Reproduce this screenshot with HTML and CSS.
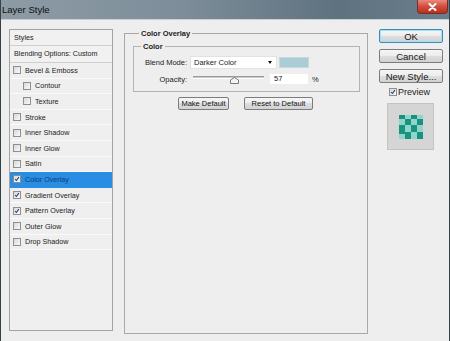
FILE: index.html
```html
<!DOCTYPE html>
<html lang="en">
<head>
    <meta charset="UTF-8">
    <title>Layer Style</title>
    <link rel="stylesheet" href="styles.css">
</head>
<body>
    <div class="window">
        <div class="titlebar">
            <span class="title">Layer Style</span>
            <span class="close">
                <svg width="9" height="8" viewBox="0 0 9 8"><path d="M1.5 1L7.5 7M7.5 1L1.5 7" stroke="#fff" stroke-width="2" stroke-linecap="round"/></svg>
            </span>
        </div>

        <div class="client">
            <div class="styles-list">
                <div class="list-head">Styles</div>
                <div class="list-head tall">Blending Options: Custom</div>
                <div class="item"><span class="check"></span>Bevel &amp; Emboss</div>
                <div class="item sub"><span class="check"></span>Contour</div>
                <div class="item sub"><span class="check"></span>Texture</div>
                <div class="item"><span class="check"></span>Stroke</div>
                <div class="item"><span class="check"></span>Inner Shadow</div>
                <div class="item"><span class="check"></span>Inner Glow</div>
                <div class="item"><span class="check"></span>Satin</div>
                <div class="item selected"><span class="check"><svg viewBox="0 0 8 8"><polyline points="1.5,4 3.2,6 6.5,1.5"/></svg></span>Color Overlay</div>
                <div class="item"><span class="check"><svg viewBox="0 0 8 8"><polyline points="1.5,4 3.2,6 6.5,1.5"/></svg></span>Gradient Overlay</div>
                <div class="item"><span class="check"><svg viewBox="0 0 8 8"><polyline points="1.5,4 3.2,6 6.5,1.5"/></svg></span>Pattern Overlay</div>
                <div class="item"><span class="check"></span>Outer Glow</div>
                <div class="item"><span class="check"></span>Drop Shadow</div>
            </div>

            <fieldset class="panel">
                <legend>Color Overlay</legend>
                <fieldset class="group">
                    <legend>Color</legend>
                    <div class="field">
                        <label>Blend Mode:</label>
                        <div class="select">Darker Color<span class="arrow"></span></div>
                        <div class="swatch"></div>
                    </div>
                    <div class="field opacity">
                        <label>Opacity:</label>
                        <div class="slider">
                            <svg class="thumb" style="left: 37px" width="9" height="7" viewBox="0 0 9 7"><path d="M0.5 6.5V3L4.5 0.5L8.5 3V6.5Z" fill="#f4f4f4" stroke="#7a7a7a"/></svg>
                        </div>
                        <div class="num">57</div>
                        <span class="unit">%</span>
                    </div>
                </fieldset>
                <div class="defaults">
                    <button class="btn small make">Make Default</button>
                    <button class="btn small reset">Reset to Default</button>
                </div>
            </fieldset>

            <div class="actions">
                <button class="btn main default">OK</button>
                <button class="btn main">Cancel</button>
                <button class="btn main">New Style...</button>
                <div class="preview-check">
                    <span class="check"><svg viewBox="0 0 8 8"><polyline points="1.5,4 3.2,6 6.5,1.5"/></svg></span>Preview
                </div>
                <div class="preview-box">
                    <svg width="24" height="24" viewBox="0 0 24 24">
                        <rect x="0" y="0" width="24" height="24" fill="#92d4ca"/>
                        <rect x="0" y="0" width="6" height="4" fill="#17937f"/>
                        <rect x="12" y="0" width="6" height="4" fill="#17937f"/>
                        <rect x="6" y="4" width="6" height="6" fill="#17937f"/>
                        <rect x="18" y="4" width="6" height="6" fill="#17937f"/>
                        <rect x="0" y="10" width="6" height="7" fill="#17937f"/>
                        <rect x="12" y="10" width="6" height="7" fill="#17937f"/>
                        <rect x="6" y="17" width="6" height="7" fill="#17937f"/>
                        <rect x="18" y="17" width="6" height="7" fill="#17937f"/>
                        <rect x="0" y="17" width="6" height="2" fill="#17937f"/>
                    </svg>
                </div>
            </div>
        </div>
    </div>
</body>
</html>
```

FILE: styles.css
```css
body {
    margin: 0;
    font-family: 'Liberation Sans', Arial, sans-serif;
    color: #1b1b1b;
    background: #eeeeee;
}

.window {
    width: 450px;
    height: 341px;
    box-sizing: border-box;
    border-left: 1px solid #33424b;
    border-right: 1px solid #33424b;
    background: #eeeeee;
    display: flex;
    flex-direction: column;
    overflow: hidden;
}

.titlebar {
    height: 19px;
    flex: none;
    display: flex;
    justify-content: space-between;
    align-items: flex-start;
    background: linear-gradient(90deg, #8d9ba5 0%, #7d8e9a 40%, #5f727f 75%, #6b7e8b 100%);
    border-bottom: 1px solid #c8d0d6;
}

.title {
    font-size: 9.5px;
    line-height: 19px;
    padding-left: 1px;
    color: #101010;
}

.close {
    width: 31px;
    height: 14px;
    box-sizing: border-box;
    margin-right: 1px;
    background: linear-gradient(#ea8a7c, #d24c3c 50%, #b82f1f);
    border: 1px solid #7a2d24;
    border-top: none;
    border-radius: 0 0 4px 4px;
    display: flex;
    align-items: center;
    justify-content: center;
}

.client {
    flex: 1;
    display: flex;
    align-items: flex-start;
    gap: 11px;
    padding: 9px 0 0 8px;
}

/* styles list */
.styles-list {
    width: 104px;
    height: 302px;
    flex: none;
    box-sizing: border-box;
    border: 1px solid #a3a3a3;
    background: #efefef;
    font-size: 7.2px;
}

.list-head {
    height: 16px;
    line-height: 15px;
    padding-left: 4px;
    box-sizing: border-box;
    border-bottom: 1px solid #cfcfcf;
    background: #f1f1f1;
}

.list-head.tall {
    height: 17px;
    line-height: 16px;
}

.item {
    height: 15.6px;
    display: flex;
    align-items: center;
    gap: 4px;
    padding-left: 3px;
    box-sizing: border-box;
    border-bottom: 1px solid #fafafa;
}

.item.sub {
    padding-left: 13px;
}

.item.selected {
    background: #2a8de4;
    border-bottom-color: #2a8de4;
    color: #0f3c74;
}

.check {
    width: 8px;
    height: 8px;
    flex: none;
    box-sizing: border-box;
    border: 1px solid #8f8f8f;
    background: linear-gradient(135deg, #d8d8d8, #fafafa);
    display: flex;
}

.check svg {
    width: 6px;
    height: 6px;
}

.check polyline {
    fill: none;
    stroke: #1d3a70;
    stroke-width: 1.4;
}

/* color overlay panel */
.panel {
    width: 244px;
    height: 305px;
    flex: none;
    box-sizing: border-box;
    margin: 0;
    padding: 0 7px 0 8px;
    min-width: 0;
    border: 1px solid #a8a8a8;
}

legend {
    font-size: 7.5px;
    font-weight: bold;
    line-height: 9px;
    padding: 0 2px;
    margin-left: 6px;
}

.group {
    margin: 4px 0 0;
    padding: 5px 0 7px;
    min-width: 0;
    border: 1px solid #b3b3b3;
}

.group legend {
    margin-left: 7px;
}

.field {
    display: flex;
    align-items: center;
    height: 13px;
    font-size: 7.5px;
}

.field label {
    width: 53px;
    margin-right: 3px;
    text-align: right;
}

.select {
    width: 87px;
    height: 13px;
    box-sizing: border-box;
    padding-left: 3px;
    background: #fff;
    border: 1px solid #e2e2e2;
    display: flex;
    align-items: center;
    justify-content: space-between;
}

.arrow {
    width: 0;
    height: 0;
    margin-right: 4px;
    border-left: 2.5px solid transparent;
    border-right: 2.5px solid transparent;
    border-top: 3px solid #111;
}

.swatch {
    width: 30px;
    height: 11px;
    margin-left: 2px;
    box-sizing: border-box;
    background: #a9ccd5;
    border: 1px solid #c7d9de;
}

.field.opacity {
    height: 10px;
    margin-top: 5px;
}

.field.opacity label {
    margin-right: 6px;
}

.slider {
    position: relative;
    width: 71px;
    height: 10px;
}

.slider::before {
    content: "";
    display: block;
    margin-top: 2px;
    height: 1px;
    border-top: 1px solid #9a9a9a;
    border-bottom: 1px solid #ffffff;
    background: #c8c8c8;
}

.thumb {
    position: absolute;
    top: 3px;
}

.num {
    width: 38px;
    height: 10px;
    margin-left: 6px;
    box-sizing: border-box;
    padding-left: 4px;
    line-height: 10px;
    background: #fff;
}

.unit {
    margin-left: 4px;
}

.defaults {
    display: flex;
    justify-content: center;
    gap: 15px;
    margin-top: 5px;
    margin-left: -2px;
}

/* buttons */
.btn {
    font-family: 'Liberation Sans', Arial, sans-serif;
    color: #151515;
    padding: 0;
    box-sizing: border-box;
    background: linear-gradient(#f6f6f6, #ececec 50%, #dedede 50%, #d2d2d2);
    border: 1px solid #7c7c7c;
    border-radius: 2px;
}

.btn.small {
    height: 13px;
    font-size: 7.5px;
}

.btn.make {
    width: 51px;
}

.btn.reset {
    width: 69px;
}

.actions {
    width: 64px;
    flex: none;
    display: flex;
    flex-direction: column;
}

.btn.main {
    height: 14px;
    font-size: 9.5px;
    margin-bottom: 6px;
}

.btn.default {
    border-color: #3f8ab8;
    box-shadow: inset 0 0 0 1px #a6e0f5;
}

.preview-check {
    height: 12px;
    margin-top: -3px;
    padding-left: 10px;
    display: flex;
    align-items: center;
    gap: 1px;
    font-size: 9px;
}

.preview-box {
    width: 47px;
    height: 47px;
    margin: 5px 0 0 8px;
    box-sizing: border-box;
    background: #d5d5d5;
    border: 1px solid #c4c4c4;
    display: flex;
    align-items: center;
    justify-content: center;
}
```
